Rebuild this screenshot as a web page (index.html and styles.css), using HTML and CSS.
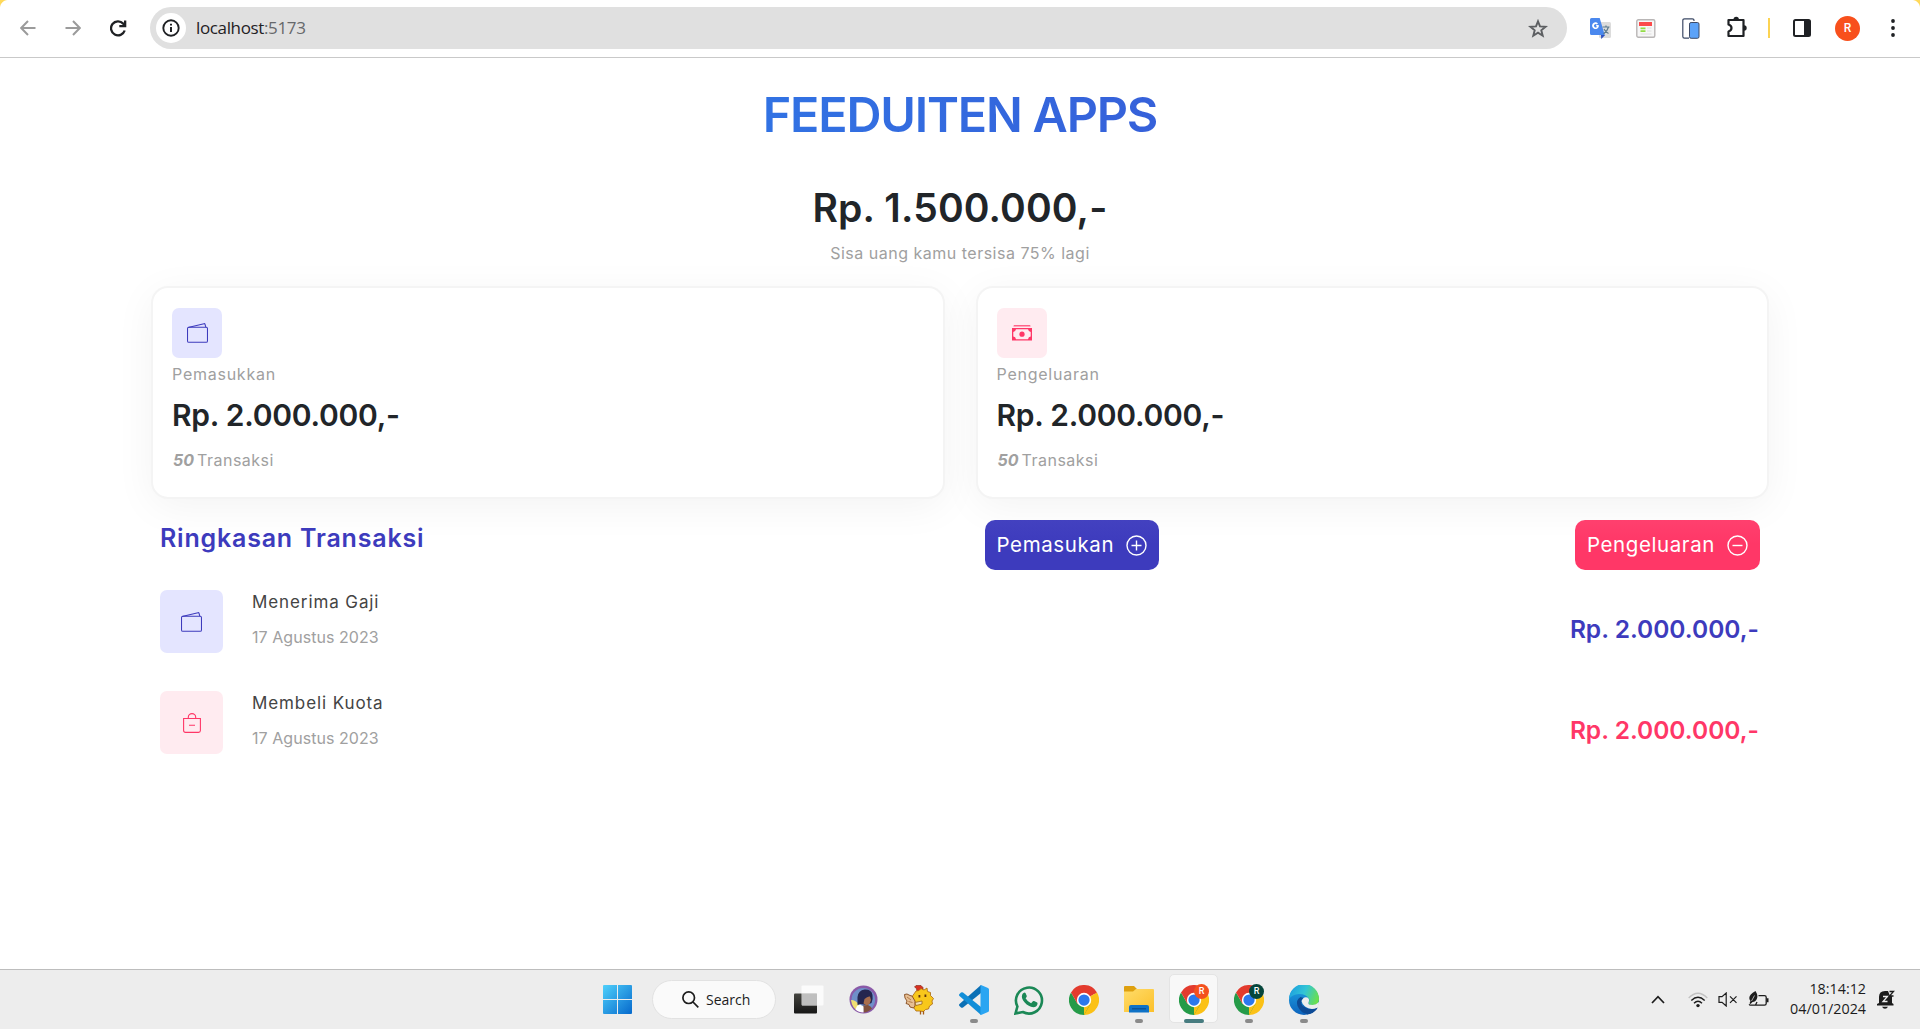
FILE: index.html
```html
<!DOCTYPE html>
<html lang="id">
<head>
<meta charset="utf-8">
<title>Feeduiten Apps</title>
<link rel="stylesheet" href="styles.css">
</head>
<body>
<svg class="defs" width="0" height="0">
  <defs>
    <linearGradient id="win" x1="0" y1="0" x2="1" y2="1"><stop offset="0" stop-color="#4fd0fb"/><stop offset="1" stop-color="#0669cc"/></linearGradient>
    <linearGradient id="dark" x1="0" y1="0" x2="0" y2="1"><stop offset="0" stop-color="#44443f"/><stop offset="1" stop-color="#161616"/></linearGradient>
    <linearGradient id="folder" x1="0" y1="0" x2="1" y2="1"><stop offset="0" stop-color="#ffdc6a"/><stop offset="1" stop-color="#fcc02a"/></linearGradient>
    <linearGradient id="edgeTop" x1="0" y1="0.3" x2="1" y2="0.6"><stop offset="0" stop-color="#1d9fe0"/><stop offset="0.5" stop-color="#33c5d5"/><stop offset="1" stop-color="#6be04b"/></linearGradient>
    <linearGradient id="edgeSide" x1="0" y1="0" x2="0" y2="1"><stop offset="0" stop-color="#1ea6e4"/><stop offset="1" stop-color="#0d63bd"/></linearGradient>
    <symbol id="chrome" viewBox="0 0 48 48">
      <path fill="#e33b2e" d="M24 24 3.2 12A24 24 0 0 1 44.800 12z"/>
      <path fill="#fbc116" d="M24 24 44.800 12A24 24 0 0 1 24 48l-1-4z"/>
      <path fill="#259b48" d="M24 48A24 24 0 0 1 3.200 12L13.600 30 24 34l10.400-4z"/>
      <path fill="#fbc116" d="M34.400 30 24 48 24 24z"/>
      <path fill="#e33b2e" d="M3.200 12 13.600 30 24 24V13H44.200L30 8z"/>
      <circle cx="24" cy="24" r="11.500" fill="#fff"/>
      <circle cx="24" cy="24" r="9" fill="#2b78ee"/>
    </symbol>
    <symbol id="wallet" viewBox="0 0 20 19">
      <g fill="none" stroke="currentColor" stroke-width="1"><rect x=".5" y="4" width="19" height="14.300" rx="1.300"/><path d="M1 4.200 16.200.6Q17 .5 17.200 1.300L17.900 4"/></g>
    </symbol>
  </defs>
</svg>

<header class="toolbar">
  <nav class="nav">
    <svg width="16" height="16" viewBox="0 0 16 16" fill="none" stroke="#9b9b9b" stroke-width="2"><path d="M15.500 8H1.500M8 1 1.200 8 8 15"/></svg>
    <svg width="16" height="16" viewBox="0 0 16 16" fill="none" stroke="#9b9b9b" stroke-width="2"><path d="M.5 8H14.500M8 1 14.800 8 8 15"/></svg>
    <svg width="17" height="17" viewBox="0 0 17 17"><path d="M14.700 10.500A7 7 0 1 1 13.200 3.600L15 5.400" fill="none" stroke="#1f2124" stroke-width="2.300"/><path d="M16.300.4V7.200H9.300V5H14V.4z" fill="#1f2124"/></svg>
  </nav>
  <div class="omnibox">
    <span class="info"><svg width="18" height="18" viewBox="0 0 18 18"><circle cx="9" cy="9" r="7.700" fill="none" stroke="#1f2124" stroke-width="1.900"/><path d="M8 8h2v5H8zM8 4.800h2v1.800H8z" fill="#1f2124"/></svg></span>
    <span class="url">localhost<span class="port">:5173</span></span>
    <svg class="star" width="20" height="19" viewBox="0 0 20 19" fill="none" stroke="#5d5f62" stroke-width="1.900"><path d="m10 2.300 2 5.100 5.600.4-4.300 3.500 1.400 5.400-4.700-3-4.700 3 1.400-5.400L2.400 7.800 8 7.400z"/></svg>
  </div>
  <div class="extensions">
    <svg width="21" height="21" viewBox="0 0 21 21"><rect x="9" y="4" width="12" height="16" rx="1.500" fill="#dcdcdc"/><path d="M1.500 0h8.200l5 17H1.500A1.500 1.500 0 0 1 0 15.500v-14A1.500 1.500 0 0 1 1.500 0z" fill="#4a88ee"/><path d="m11 17 4.200 0-4 4z" fill="#2e50be"/><path d="M12.500 9h7M16 7.500V9M18.500 9q-1 4-5 7M14 11q1.500 3 4.500 4.500" fill="none" stroke="#5d7b8d" stroke-width="1.200"/><path d="M8.700 7H6.200v1.500h1a1.700 1.700 0 1 1-.4-2L8 5.400a3.400 3.400 0 1 0 .8 3z" fill="#fff"/></svg>
    <svg class="ext-news" width="20" height="19" viewBox="0 0 20 19"><rect x=".8" y=".8" width="18" height="17.500" rx="1.500" fill="#f7f7f7" stroke="#b9b6b6" stroke-width="1.400"/><path d="M3 3h13v4H3z" fill="#fb4a4a"/><path d="M4.500 8.500h5v1.800h-5zM4.500 11.300h5v1.800h-5z" fill="#92dc45"/><path d="M11 9h4.500M11 12h4.500M4.500 15h11" stroke="#dedede"/></svg>
    <svg class="ext-device" width="18" height="21" viewBox="0 0 18 21"><path d="M12 3V2.500Q12 .8 10.300.8H2.500Q.8.800.8 2.500v16q0 1.700 1.700 1.700H7" fill="#fff" stroke="#3d4a66" stroke-width="1.200"/><rect x="7.500" y="4.500" width="9.500" height="15.800" rx="1.600" fill="#5ba2f8" stroke="#3d4a66"/></svg>
    <svg class="ext-puzzle" width="22" height="22" viewBox="0 0 22 22"><path d="M2.500 4H17.500V20H2.500V15.500Q5.500 14.500 5.500 12T2.500 8.500z" fill="none" stroke="#1f2124" stroke-width="2.200" stroke-linejoin="round"/><path d="M7.500 3.500a2.700 2.700 0 0 1 5.400 0zM18 9.300a2.700 2.700 0 0 1 0 5.400z" fill="#1f2124"/></svg>
    <span class="divider"></span>
    <svg class="side-panel" width="18" height="18" viewBox="0 0 18 18"><rect x="1" y="1" width="16" height="16" rx="1.500" fill="#fff" stroke="#1f2124" stroke-width="2"/><path d="M11 1h6v16h-6z" fill="#1f2124"/></svg>
    <span class="profile">R</span>
    <svg width="4" height="18" viewBox="0 0 4 18" fill="#1f2124"><circle cx="2" cy="2" r="1.900"/><circle cx="2" cy="9" r="1.900"/><circle cx="2" cy="16" r="1.900"/></svg>
  </div>
</header>

<main class="page">
  <h1 class="brand"><span class="brand-text">FEEDUITEN APPS</span></h1>
  <h2 class="balance">Rp. 1.500.000,-</h2>
  <p class="remaining">Sisa uang kamu tersisa 75% lagi</p>

  <section class="cards">
    <article class="card">
      <span class="badge income"><svg width="21" height="20"><use href="#wallet"/></svg></span>
      <p class="label">Pemasukkan</p>
      <h3 class="total">Rp. 2.000.000,-</h3>
      <p class="count"><b class="number">50</b> Transaksi</p>
    </article>
    <article class="card">
      <span class="badge expense"><svg width="20" height="16" viewBox="0 0 20 16" fill="currentColor"><path d="M2 0h16q.6.800.6 1.500H1.400Q1.400.800 2 0z" opacity=".75"/><path fill-rule="evenodd" d="M0 3h20v12.500H0zM4 4.300A3.300 3.300 0 0 1 1.300 7v4.500A3.300 3.300 0 0 1 4 14.200h12a3.300 3.300 0 0 1 2.700-2.700V7A3.300 3.300 0 0 1 16 4.300z"/><circle cx="10" cy="9.200" r="2.600"/></svg></span>
      <p class="label">Pengeluaran</p>
      <h3 class="total">Rp. 2.000.000,-</h3>
      <p class="count"><b class="number">50</b> Transaksi</p>
    </article>
  </section>

  <section class="summary">
    <h4 class="summary-title">Ringkasan Transaksi</h4>
    <div class="actions">
      <button class="btn income-btn">Pemasukan<svg width="21" height="21" viewBox="0 0 21 21" fill="none" stroke="#fff" stroke-width="1.400"><circle cx="10.500" cy="10.500" r="9.500"/><path d="M5.500 10.500h10M10.500 5.500v10"/></svg></button>
      <button class="btn expense-btn">Pengeluaran<svg width="21" height="21" viewBox="0 0 21 21" fill="none" stroke="#fff" stroke-width="1.400"><circle cx="10.500" cy="10.500" r="9.500"/><path d="M5.500 10.500h10"/></svg></button>
    </div>
  </section>

  <section class="transactions">
    <div class="row">
      <span class="badge large income"><svg width="21" height="20"><use href="#wallet"/></svg></span>
      <div class="detail"><p class="name">Menerima Gaji</p><p class="date">17 Agustus 2023</p></div>
      <p class="amount in">Rp. 2.000.000,-</p>
    </div>
    <div class="row">
      <span class="badge large expense"><svg width="18" height="20" viewBox="0 0 18 20" fill="none" stroke="currentColor" stroke-width="1.100"><path d="M.6 5.500h16.800v12q0 1.900-1.900 1.900h-13Q.6 19.400.6 17.500zM5.300 5.500V4.300a3.700 3.700 0 0 1 7.400 0v1.200M6 12.300h6"/></svg></span>
      <div class="detail"><p class="name">Membeli Kuota</p><p class="date">17 Agustus 2023</p></div>
      <p class="amount out">Rp. 2.000.000,-</p>
    </div>
  </section>
</main>

<footer class="taskbar">
  <div class="apps">
    <span class="app start"><svg width="29" height="29" viewBox="0 0 29 29" fill="url(#win)"><path d="M1 0h13v14H0V1a1 1 0 0 1 1-1zM15 0h13a1 1 0 0 1 1 1v13H15zM0 15h14v14H1a1 1 0 0 1-1-1zM15 15h14v13a1 1 0 0 1-1 1H15z"/></svg></span>
    <span class="search"><svg width="17" height="17" viewBox="0 0 17 17" fill="none" stroke="#1c1c1c" stroke-width="1.700"><circle cx="6.700" cy="6.700" r="5.800"/><path d="m11 11 5.300 5.300"/></svg>Search</span>
    <span class="app"><svg width="30" height="29" viewBox="0 0 30 29"><rect y="8.500" width="23" height="20" rx="1" fill="url(#dark)"/><rect x="7.500" y=".5" width="22" height="20" rx="1" fill="#fff" fill-opacity=".75"/><path d="M8 8.500h15v12H8z" fill="#bbb" fill-opacity=".8"/></svg></span>
    <span class="app"><svg width="29" height="29" viewBox="0 0 29 29"><circle cx="14.500" cy="14.500" r="14" fill="#8a5aa8"/><circle cx="14.300" cy="14.800" r="11.800" fill="#6f8fc9"/><path d="M2 15q5 0 8 5l-1 6Q3 23 2 15z" fill="#f1df73"/><path d="M8.500 12q1-7 7-7.500 7-.5 8 5.500.7 4-1 8l-5 2-6-1-3 1z" fill="#25264f"/><path d="M15.500 14q3-3 5.500-2.500l1 3.500-1.500 4-3 1.500-3-2z" fill="#a96e4d"/><path d="M14 20.500l5-.5q3 1 4 3.500-4 4-8.500 4z" fill="#80513d"/><path d="M8 21l3-1.500 3.500 2 0 6q-5 0-8-3z" fill="#fff"/></svg></span>
    <span class="app"><svg width="30" height="30" viewBox="0 0 30 30"><path d="M13 7 12.500 3.500 10.500 2 12 .5h5l2 2V7z" fill="#d93121" stroke="#7c2414" stroke-width=".6"/><path d="m12 6 3-.5 2-2 3 1.500 3-2 .5 3.500 3 1 0 3 3 3-1.500 2.500.5 3-3 2-1 3-3 .5-2 2-4-.5-3.500 0-2-3-3-2 .5-4-1-3 2-3z" fill="#f8c71b" stroke="#a96610" stroke-width=".8"/><path d="M.5 9.500 3 9l3 1.500 2 .5 3 5v5l-1.500 2L6 22l-1-2.500-3-1L3 16l-2-3z" fill="#e7bf93" stroke="#82471b" stroke-width=".9"/><path d="M3 12l4 3M4.500 16.500l4 1" stroke="#a86a35" stroke-width=".8"/><path d="M14.500 10h1.800v2.500h-1.800zM20.500 9.500h1.800V12h-1.800z" fill="#60340d"/><path d="M11 17.500l7-1.500v3l-6 1.500z" fill="#f2e0b6" stroke="#8e5417" stroke-width=".7"/><path d="M16.500 26v3.500M19.500 26v3.500" stroke="#a65b13" stroke-width="1.300"/></svg></span>
    <span class="app running"><svg width="30" height="30" viewBox="0 0 30 30"><path d="M22 0v8L4 22.500q-1 .6-2 0L.5 21q-1-1 0-2z" fill="#0b70b5"/><path d="M22 30v-8L4 7.500q-1-.6-2 0L.5 9q-1 1 0 2z" fill="#128ed8"/><path d="M22 0l7 3q1 .5 1 1.500v21q0 1-1 1.500l-7 3q-1-.5-.5-1.500V1.500Q21.500.5 22 0z" fill="#2aa5f2"/></svg></span>
    <span class="app"><svg width="30" height="30" viewBox="0 0 30 30"><path d="m1.500 28.500 1.900-7A13 13 0 1 1 8.800 27z" fill="none" stroke="#1b8856" stroke-width="2.600"/><path d="M9.500 8q1.200-1 2 0l1.300 3q.2.800-1.200 2.300 2 3.700 5.500 5l1.800-2q.6-.5 1.200-.2l3 1.500q.6.400.4 1.300-.9 3.300-4.200 3.300-4.700-.4-8.600-4.700-3.700-4.400-2.600-7.500.4-1.300 1.400-2z" fill="#1b8856"/></svg></span>
    <span class="app"><svg width="30" height="30"><use href="#chrome"/></svg></span>
    <span class="app running"><svg width="30" height="27" viewBox="0 0 30 27"><path d="M1 0h9l3 3h-1v4H0V1q0-1 1-1z" fill="#dea00f"/><path d="M0 5.500h9l3-2.500h17q1 0 1 1v22H0z" fill="url(#folder)"/><path d="M5 26.500V21q0-2 2-2h16q2 0 2 2v5.500z" fill="#0f72c6"/><path d="M8 22.800h14" stroke="#0a4c8e" stroke-width="1.200"/></svg></span>
    <span class="app active"><svg width="30" height="30"><use href="#chrome"/></svg><b class="tag orange">R</b></span>
    <span class="app running"><svg width="30" height="30"><use href="#chrome"/></svg><b class="tag green">R</b></span>
    <span class="app running"><svg width="30" height="30" viewBox="0 0 30 30"><circle cx="15" cy="15" r="15" fill="url(#edgeSide)"/><path d="M0 14A15 15 0 0 1 30 14q0 6-6.500 6-5 0-4-2.500 1.500-2 .5-3.500Q17.500 9 10 9 3 9.500 0 14z" fill="url(#edgeTop)"/><path d="M11.500 12q-5 3-3 9 3 7 10 8 6-.6 10-6.500-4 2-8 1.500-6.500-1-8-5-.6-4 2-6z" fill="#0d4b96"/><path d="M12.500 16q2-5 6-3.500 2.500 1.500 1 5-1 2.500 4 2.500 4-.2 5.800-2.500L30 17q0 5-2 6-7 2.500-12-1.500-3-2.500-3.500-5.500z" fill="#ededed"/><path d="M14 20q3 4.500 9 4.500 4 0 5.500-2l-.5 1.500q-4 5-10 5.500z" fill="#0d4b96"/></svg></span>
  </div>
  <div class="tray">
    <svg class="caret" width="14" height="9" viewBox="0 0 14 9" fill="none" stroke="#1c1c1c" stroke-width="1.700"><path d="m1 8 6-6.300L13 8"/></svg>
    <svg class="wifi" width="20" height="16" viewBox="0 0 20 16" fill="none" stroke="#1c1c1c" stroke-width="1.400"><path d="M.7 6Q10-3.500 19.300 6" stroke="#c2c2c2"/><path d="M3.300 8.500q6.700-6.500 13.400 0M6 11.200q4-4 8 0"/><circle cx="10" cy="13.600" r="1.700" fill="#1c1c1c" stroke="none"/></svg>
    <svg class="sound" width="19" height="15" viewBox="0 0 19 15" fill="none" stroke="#1c1c1c" stroke-width="1.200"><path d="M1 4.700h3L8.200 1v13L4 10.300H1zM12 4.300l6.500 6.500M18.500 4.300 12 10.800"/></svg>
    <svg class="battery" width="21" height="17" viewBox="0 0 21 17"><path d="M10.500 4.600h6q1.700 0 1.700 1.700v6.200q0 1.700-1.700 1.700H2.500q-1 0-1.300-1M9 11l-1.500 3" fill="none" stroke="#1c1c1c" stroke-width="1.300"/><path d="M18.500 7.300h2v4h-2zM7.500 0q3 4.500 1.300 8-1.300 3-4.300 3L2.500 13l-1-.7 1-2.300Q-1.500 5 7.500 0z" fill="#1c1c1c"/><path d="M6.500 4.500 3.500 10" stroke="#ededed" stroke-width=".7"/></svg>
    <div class="clock"><span>18:14:12</span><span>04/01/2024</span></div>
    <svg class="bell" width="18" height="19" viewBox="0 0 18 19"><path d="M2 13V7q0-6 6-6h3l2 5h2v7l1.500 1V15.500H0V14zM5 16.800h6q-1 2-3 2t-3-2z" fill="#1c1c1c"/><path d="M6 6.500h4.500L6 11.500h4.500" fill="none" stroke="#ededed" stroke-width="1.300"/><path d="M12.500 1.500h4l-4 4.500h4" fill="none" stroke="#1c1c1c" stroke-width="1.300"/></svg>
  </div>
</footer>
</body>
</html>
```
FILE: styles.css
```css
* { box-sizing: border-box; }
body {
  margin: 0;
  height: 1029px;
  display: flex;
  flex-direction: column;
  overflow: hidden;
  background: #fff;
  color: #212529;
  font-family: Inter, "Liberation Sans", sans-serif;
}
h1, h2, h3, h4, p { margin: 0; }
svg { display: block; flex: none; }
.defs { position: absolute; }

/* Browser toolbar */
.toolbar {
  height: 58px;
  flex: none;
  display: flex;
  align-items: center;
  padding-bottom: 1px;
  border-bottom: 1px solid #c9c9c9;
  background:
    radial-gradient(circle at 8px 8px, transparent 7.5px, #ffd95a 8.5px) 0 0 / 8px 8px no-repeat,
    radial-gradient(circle at 0 8px, transparent 7.5px, #ffd95a 8.5px) 100% 0 / 8px 8px no-repeat,
    #fff;
}
.nav { display: flex; align-items: center; gap: 29px; width: 150px; padding-left: 20px; }
.omnibox {
  width: 1417px;
  height: 42px;
  display: flex;
  align-items: center;
  padding: 0 19px 0 6px;
  border-radius: 21px;
  background: #e0e0e0;
}
.info {
  width: 30px;
  height: 30px;
  display: flex;
  align-items: center;
  justify-content: center;
  border-radius: 50%;
  background: #fff;
}
.url { flex: 1; padding-left: 10px; color: #1f2124; font: 400 17px/24px "Open Sans", sans-serif; letter-spacing: -.36px; }
.port { color: #66686b; }
.extensions { flex: 1; display: flex; align-items: center; padding-left: 23px; }
.ext-news { margin-left: 25px; }
.ext-device { margin-left: 26px; }
.ext-puzzle { margin-left: 26px; margin-top: -2px; }
.divider { width: 2px; height: 20px; margin: 0 23px 0 20px; background: #fcd352; }
.profile {
  width: 25px;
  height: 25px;
  margin: 0 31px 0 24px;
  border-radius: 50%;
  background: #f8501c;
  color: #fff;
  font: 500 12px/25px Roboto, sans-serif;
  text-align: center;
}

/* Page */
.page { flex: 1; padding: 28px 151px 0; }
.brand { height: 58px; font-size: 48.500px; line-height: 58px; font-weight: 600; letter-spacing: -1.200px; text-align: center; }
.brand-text {
  display: block;
  background: linear-gradient(90deg, #2a8df2, #3d46cb);
  background-clip: text;
  -webkit-background-clip: text;
  color: transparent;
}
.balance { margin-top: 40px; font-size: 39px; line-height: 47px; font-weight: 600; letter-spacing: .15px; text-align: center; }
.remaining { margin-top: 10px; font-size: 16px; line-height: 24px; letter-spacing: .5px; text-align: center; color: #a0a0a0; }

.cards { display: grid; grid-template-columns: 1fr 1fr; gap: 31px; margin-top: 21px; }
.card {
  height: 213px;
  padding: 20px 19px;
  border: 2px solid #f4f4f4;
  border-radius: 17px;
  background: #fff;
  box-shadow: 0 8px 40px rgba(0, 0, 0, .05);
}
.badge { width: 50px; height: 50px; display: flex; align-items: center; justify-content: center; border-radius: 7px; }
.badge.large { width: 63px; height: 63px; }
.income { background: #e4e5ff; color: #3d3bbd; }
.expense { background: #ffebf0; color: #ff3767; }
.label { margin-top: 4px; font-size: 16px; line-height: 24px; letter-spacing: .75px; color: #a0a0a0; }
.total { margin-top: 11px; font-size: 30px; line-height: 36px; font-weight: 600; letter-spacing: -.25px; }
.count { margin-top: 15px; font-size: 16px; line-height: 24px; letter-spacing: .5px; color: #a0a0a0; }
.number { font-style: italic; font-weight: 700; letter-spacing: 0; margin-left: 1px; margin-right: -2px; }

.summary { display: grid; grid-template-columns: 1fr 1fr; gap: 31px; margin-top: 21px; padding: 0 9px; }
.summary-title { padding-top: 3px; font-size: 25px; line-height: 30px; font-weight: 600; letter-spacing: .8px; color: #3d3bbd; }
.actions { display: flex; justify-content: space-between; padding-left: 9px; }
.btn {
  height: 50px;
  display: flex;
  align-items: center;
  gap: 12px;
  padding: 0 12px;
  border: 0;
  border-radius: 10px;
  color: #fff;
  font: 400 20.500px/30px Inter, sans-serif;
  letter-spacing: .6px;
}
.income-btn { background: linear-gradient(#4341c0, #3d3bbd 24px); }
.expense-btn { background: linear-gradient(#ff406e, #ff3767 24px); }

.transactions { display: flex; flex-direction: column; gap: 38px; margin-top: 20px; padding: 0 9px; }
.row { display: flex; height: 63px; }
.detail { flex: 1; padding: 0 0 0 29px; }
.name { font-size: 17px; line-height: 24px; letter-spacing: .9px; color: #444; }
.date { margin-top: 10.500px; font-size: 16px; line-height: 24px; letter-spacing: .05px; color: #a0a0a0; }
.amount { padding: 24px 1px 0 0; font-size: 24.500px; line-height: 30px; font-weight: 600; letter-spacing: 0; }
.in { color: #3d3bbd; }
.out { color: #ff3767; }

/* Desktop taskbar */
.taskbar {
  height: 60px;
  flex: none;
  display: flex;
  justify-content: flex-end;
  border-top: 1px solid #bdbdbd;
  background: #ededed;
  color: #1c1c1c;
  font-family: "Open Sans", sans-serif;
}
.apps { display: flex; align-items: center; width: 760px; }
.app { position: relative; width: 55px; height: 59px; display: flex; align-items: center; justify-content: center; }
.start { width: 59px; }
.search {
  width: 124px;
  height: 39px;
  margin: -1px 5px 0;
  display: flex;
  align-items: center;
  gap: 7px;
  padding-left: 29px;
  border: 1px solid #e2e2e2;
  border-radius: 20px;
  background: #fafafa;
  font-size: 14px;
}
.running::after, .active::after {
  content: "";
  position: absolute;
  bottom: 6px;
  left: 50%;
  width: 8px;
  height: 4px;
  margin-left: -4px;
  border-radius: 2px;
  background: #8a8a8a;
}
.active::before {
  content: "";
  position: absolute;
  inset: 4px 3px 6px;
  border: 1px solid #e4e4e4;
  border-radius: 5px;
  background: #f8f8f8;
}
.active svg { position: relative; }
.active::after { width: 20px; margin-left: -10px; background: #477c80; }
.tag {
  position: absolute;
  top: 14px;
  right: 12px;
  width: 15px;
  height: 15px;
  border-radius: 50%;
  color: #fff;
  font: 500 9px/15px Roboto, sans-serif;
  text-align: center;
}
.orange { background: #f4511e; }
.green { background: #06463c; }
.tray { width: 272px; margin-left: 300px; display: flex; align-items: center; }
.caret { margin-left: 3px; }
.wifi { margin-left: 23px; }
.sound { margin-left: 10px; }
.battery { margin-left: 11px; }
.clock { flex: 1; display: flex; flex-direction: column; text-align: right; font-size: 14.300px; line-height: 20px; padding-bottom: 2px; }
.bell { margin: 0 25px 0 11px; }
```
